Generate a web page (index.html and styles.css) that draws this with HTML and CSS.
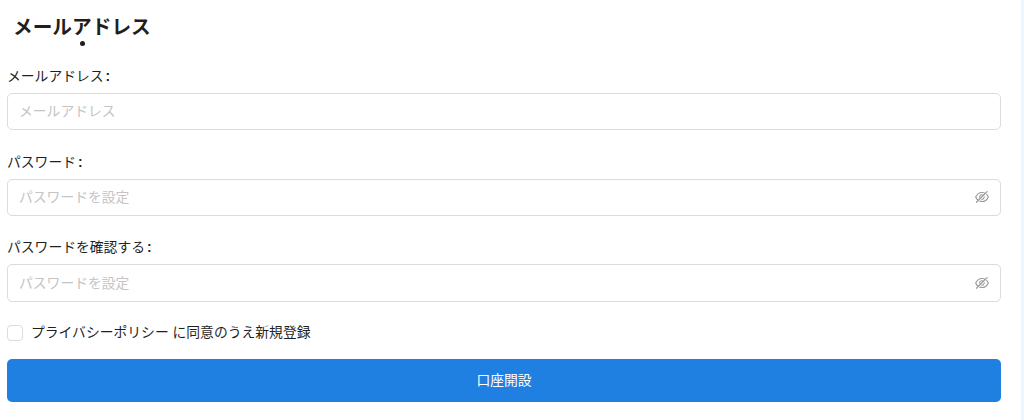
FILE: index.html
```html
<!DOCTYPE html>
<html lang="ja">
<head>
    <meta charset="UTF-8">
    <meta name="viewport" content="width=device-width, initial-scale=1.0">
    <title>口座開設</title>
    <link rel="stylesheet" href="styles.css">
</head>
<body>
    <div class="page">
        <h1 class="tab-title">メールアドレス</h1>
        <form class="signup-form">
            <div class="form-item">
                <label for="email">メールアドレス<span class="colon">:</span></label>
                <div class="input-box">
                    <input type="text" id="email" placeholder="メールアドレス">
                </div>
            </div>
            <div class="form-item">
                <label for="password">パスワード<span class="colon">:</span></label>
                <div class="input-box">
                    <input type="password" id="password" placeholder="パスワードを設定">
                    <svg class="eye-icon" viewBox="64 64 896 896" fill="currentColor">
                        <path d="M942.2 486.2Q889.47 375.11 816.7 305l-50.88 50.88C807.31 395.53 843.45 447.4 874.7 512 791.5 684.2 673.4 766 512 766q-72.67 0-133.87-22.38L323 798.75Q408 838 512 838q288.3 0 430.2-300.3a60.29 60.29 0 000-51.5zm-63.57-320.64L836 122.88a8 8 0 00-11.32 0L715.31 232.2Q624.86 186 512 186q-288.3 0-430.2 300.3a60.3 60.3 0 000 51.5q56.69 119.4 136.5 191.41L112.48 835a8 8 0 000 11.31L155.17 889a8 8 0 0011.31 0l712.15-712.12a8 8 0 000-11.32zM149.3 512C232.6 339.8 350.7 258 512 258c54.54 0 104.13 9.36 149.12 28.39l-70.3 70.3a176 176 0 00-238.13 238.13l-83.42 83.42C223.1 637.49 183.3 582.28 149.3 512zm246.7 0a112.11 112.11 0 01146.2-106.69L401.31 546.2A112 112 0 01396 512z"/>
                        <path d="M508 624c-3.46 0-6.87-.16-10.25-.47l-52.82 52.82a176.09 176.09 0 00227.42-227.42l-52.82 52.82c.31 3.38.47 6.79.47 10.25a111.94 111.94 0 01-112 112z"/>
                    </svg>
                </div>
            </div>
            <div class="form-item">
                <label for="confirm">パスワードを確認する<span class="colon">:</span></label>
                <div class="input-box">
                    <input type="password" id="confirm" placeholder="パスワードを設定">
                    <svg class="eye-icon" viewBox="64 64 896 896" fill="currentColor">
                        <path d="M942.2 486.2Q889.47 375.11 816.7 305l-50.88 50.88C807.31 395.53 843.45 447.4 874.7 512 791.5 684.2 673.4 766 512 766q-72.67 0-133.87-22.38L323 798.75Q408 838 512 838q288.3 0 430.2-300.3a60.29 60.29 0 000-51.5zm-63.57-320.64L836 122.88a8 8 0 00-11.32 0L715.31 232.2Q624.86 186 512 186q-288.3 0-430.2 300.3a60.3 60.3 0 000 51.5q56.69 119.4 136.5 191.41L112.48 835a8 8 0 000 11.31L155.17 889a8 8 0 0011.31 0l712.15-712.12a8 8 0 000-11.32zM149.3 512C232.6 339.8 350.7 258 512 258c54.54 0 104.13 9.36 149.12 28.39l-70.3 70.3a176 176 0 00-238.13 238.13l-83.42 83.42C223.1 637.49 183.3 582.28 149.3 512zm246.7 0a112.11 112.11 0 01146.2-106.69L401.31 546.2A112 112 0 01396 512z"/>
                        <path d="M508 624c-3.46 0-6.87-.16-10.25-.47l-52.82 52.82a176.09 176.09 0 00227.42-227.42l-52.82 52.82c.31 3.38.47 6.79.47 10.25a111.94 111.94 0 01-112 112z"/>
                    </svg>
                </div>
            </div>
            <label class="agree">
                <input type="checkbox">
                <span>プライバシーポリシー に同意のうえ新規登録</span>
            </label>
            <button type="button" class="submit-btn">口座開設</button>
        </form>
    </div>
</body>
</html>
```

FILE: styles.css
```css
* {
    box-sizing: border-box;
}
body {
    margin: 0;
    background: #eef7ff;
    color: #1f1f1f;
    font-family: "Liberation Sans", "Noto Sans CJK JP", sans-serif;
    font-size: 13.8px;
}
.page {
    width: 1021px;
    height: 420px;
    padding: 13px 20px 0 7px;
    background: #fff;
}
.tab-title {
    display: flex;
    flex-direction: column;
    align-items: center;
    width: fit-content;
    height: 51px;
    margin: 0 0 0 6px;
    font-size: 19.7px;
    font-weight: 700;
    line-height: 28px;
}
/* active tab dot */
.tab-title::after {
    content: "";
    width: 5px;
    height: 5px;
    margin-left: 1px;
    border-radius: 50%;
    background: #1f1f1f;
}
.form-item {
    height: 85.7px;
}
.form-item label {
    display: block;
    height: 29px;
    line-height: 26px;
}
.colon {
    margin-left: 2px;
    font-weight: 700;
}
.input-box {
    display: flex;
    align-items: center;
    height: 37.4px;
    padding: 0 11px;
    border: 1px solid #dcdcdc;
    border-radius: 5px;
}
.input-box input {
    flex: 1;
    min-width: 0;
    padding: 0;
    border: none;
    outline: none;
    background: none;
    font: inherit;
}
.input-box input::placeholder {
    color: #c4c4c4;
}
.eye-icon {
    width: 14px;
    height: 14px;
    color: #999;
}
.agree {
    display: flex;
    align-items: center;
    gap: 8px;
    height: 24px;
    line-height: 20px;
}
.agree input {
    appearance: none;
    width: 16px;
    height: 16px;
    margin: 0;
    border: 1px solid #dcdcdc;
    border-radius: 4px;
    background: #fff;
}
.submit-btn {
    display: block;
    width: 100%;
    height: 43px;
    margin-top: 14px;
    padding: 0 0 3px;
    border: none;
    border-radius: 5px;
    background: #2080e2;
    color: #fff;
    font: inherit;
    cursor: pointer;
}
```
